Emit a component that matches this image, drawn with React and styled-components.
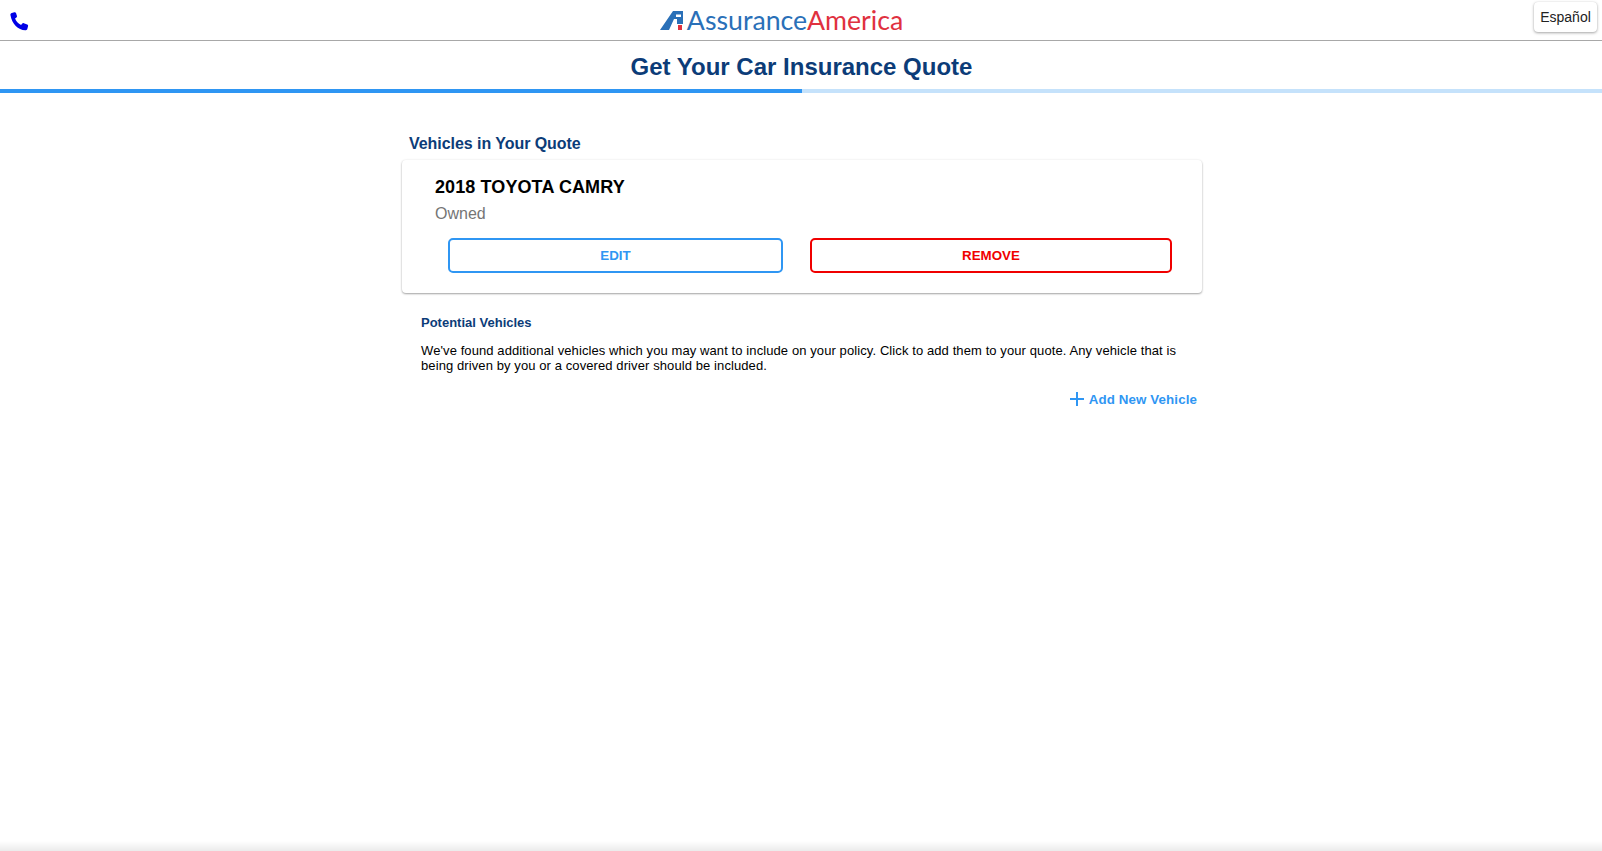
import React from "react";
import styled, { createGlobalStyle } from "styled-components";

const GlobalStyle = createGlobalStyle`
  html, body {
    margin: 0;
    padding: 0;
    height: 100%;
    overflow: hidden;
    background: #ffffff;
    font-family: "Liberation Sans", Arial, sans-serif;
  }
`;

const App = () => {
  return (
    <Page>
      <GlobalStyle />
      <Header>
        <PhoneLink aria-label="Call us">
          <svg width="19" height="19" viewBox="0.5 0.4 18 18">
            <path
              d="M2.2 1.4 4.6.6c.7-.2 1.3.1 1.6.8l.9 2.7c.2.6 0 1.1-.5 1.5l-1.3.9c.9 2.6 3 4.9 5.7 6.1l1.1-1.2c.4-.5 1-.6 1.5-.4l3.2 1.2c.7.3 1 .9.8 1.6l-.7 2.7c-.2.8-.8 1.2-1.6 1.1C8.4 17.8 2.4 11.8.9 3.2c-.1-.8.4-1.5 1.3-1.8z"
              fill="#0000e6"
            />
          </svg>
        </PhoneLink>
        <Logo>
          <svg width="24" height="19" viewBox="0 0 24 19">
            <path d="M0 19 13 0h10v13h-6V8h-3L9 19z" fill="#2a70b8" />
            <rect x="16" y="3.5" width="5" height="2.5" fill="#ffffff" />
            <rect x="18" y="14" width="4" height="5" fill="#e0313f" />
          </svg>
          <LogoText>
            Assurance<LogoAccent>America</LogoAccent>
          </LogoText>
        </Logo>
        <LanguageButton>Español</LanguageButton>
      </Header>

      <PageTitle>Get Your Car Insurance Quote</PageTitle>
      <Progress>
        <ProgressFill style={{ width: "802px" }} />
      </Progress>

      <Content>
        <SectionTitle>Vehicles in Your Quote</SectionTitle>
        <VehicleCard>
          <VehicleName>2018 TOYOTA CAMRY</VehicleName>
          <VehicleOwnership>Owned</VehicleOwnership>
          <CardActions>
            <ActionButton $color="#2f96f3" $width="335px">
              EDIT
            </ActionButton>
            <ActionButton $color="#f00000" $width="362px">
              REMOVE
            </ActionButton>
          </CardActions>
        </VehicleCard>

        <Potential>
          <PotentialTitle>Potential Vehicles</PotentialTitle>
          <PotentialText>
            We've found additional vehicles which you may want to include on
            your policy. Click to add them to your quote. Any vehicle that is
            being driven by you or a covered driver should be included.
          </PotentialText>
        </Potential>

        <AddRow>
          <AddButton>
            <svg width="16" height="16" viewBox="0 0 16 16">
              <path d="M8 1v14M1 8h14" stroke="#2f96f3" strokeWidth="2" />
            </svg>
            Add New Vehicle
          </AddButton>
        </AddRow>
      </Content>

      <BottomEdge />
    </Page>
  );
};

const Page = styled.div`
  display: flex;
  flex-direction: column;
  height: 100vh;
  background: #ffffff;
`;

const Header = styled.header`
  display: flex;
  align-items: flex-start;
  justify-content: space-between;
  height: 38px;
  padding: 2px 5px 0 10px;
  border-bottom: 1px solid #a8a8a8;
`;

const PhoneLink = styled.a`
  display: block;
  width: 19px;
  height: 19px;
  margin-top: 10px;
`;

const Logo = styled.div`
  display: flex;
  align-items: center;
  gap: 3px;
  height: 36px;
`;

const LogoText = styled.span`
  font-family: "Lato", sans-serif;
  font-size: 26.7px;
  line-height: 36px;
  color: #2a70b8;
`;

const LogoAccent = styled.span`
  color: #e0313f;
`;

const LanguageButton = styled.button`
  width: 63px;
  height: 30px;
  padding: 0;
  border: 0;
  border-radius: 4px;
  background: #ffffff;
  color: #222222;
  font-family: "Liberation Sans", Arial, sans-serif;
  font-size: 14px;
  box-shadow: 0 1px 3px rgba(0, 0, 0, 0.35), 0 0 1px rgba(0, 0, 0, 0.12);
`;

const PageTitle = styled.h1`
  margin: 0;
  height: 48px;
  padding-left: 1px;
  text-align: center;
  font-size: 24px;
  line-height: 52px;
  font-weight: 700;
  color: #0c3c78;
`;

const Progress = styled.div`
  height: 4px;
  background: #c5e2fb;
`;

const ProgressFill = styled.div`
  height: 100%;
  background: #2f96f3;
`;

const Content = styled.main`
  flex: 1;
  width: 802px;
  margin: 0 auto;
  padding-left: 2px;
  box-sizing: border-box;
`;

const SectionTitle = styled.h2`
  margin: 41px 0 0 7px;
  height: 26px;
  font-size: 16px;
  line-height: 20px;
  font-weight: 700;
  letter-spacing: -0.05px;
  color: #0c3c78;
`;

const VehicleCard = styled.section`
  height: 133px;
  box-sizing: border-box;
  padding: 18px 30px 0 33px;
  border-radius: 4px;
  background: #ffffff;
  box-shadow: 0 1px 2px rgba(0, 0, 0, 0.35), 0 0 3px rgba(0, 0, 0, 0.06);
`;

const VehicleName = styled.div`
  font-size: 18px;
  line-height: 19px;
  font-weight: 700;
  letter-spacing: 0.1px;
  color: #000000;
`;

const VehicleOwnership = styled.div`
  margin-top: 7px;
  font-size: 16px;
  line-height: 20px;
  color: #757575;
`;

const CardActions = styled.div`
  display: flex;
  justify-content: space-between;
  margin: 14px 0 0 13px;
`;

const ActionButton = styled.button`
  width: ${(props) => props.$width};
  height: 35px;
  padding: 0;
  box-sizing: border-box;
  border: 2px solid ${(props) => props.$color};
  border-radius: 5px;
  background: #ffffff;
  color: ${(props) => props.$color};
  font-family: "Liberation Sans", Arial, sans-serif;
  font-size: 13.33px;
  font-weight: 700;
`;

const Potential = styled.div`
  margin: 22px 0 0 19px;
`;

const PotentialTitle = styled.h3`
  margin: 0;
  font-size: 13px;
  line-height: 16px;
  font-weight: 700;
  color: #0c3c78;
`;

const PotentialText = styled.p`
  margin: 12px 0 0;
  font-size: 13px;
  line-height: 15px;
  letter-spacing: 0.095px;
  color: #000000;
`;

const AddRow = styled.div`
  display: flex;
  justify-content: flex-end;
  margin-top: 18px;
  padding-right: 5px;
`;

const AddButton = styled.button`
  display: flex;
  align-items: center;
  gap: 4px;
  padding: 0;
  border: 0;
  background: none;
  color: #2f96f3;
  font-family: "Liberation Sans", Arial, sans-serif;
  font-size: 13.33px;
  font-weight: 700;
  letter-spacing: 0.1px;
`;

const BottomEdge = styled.footer`
  height: 10px;
  background: linear-gradient(to bottom, rgba(236, 236, 236, 0), #ebebeb);
`;

export default App;
